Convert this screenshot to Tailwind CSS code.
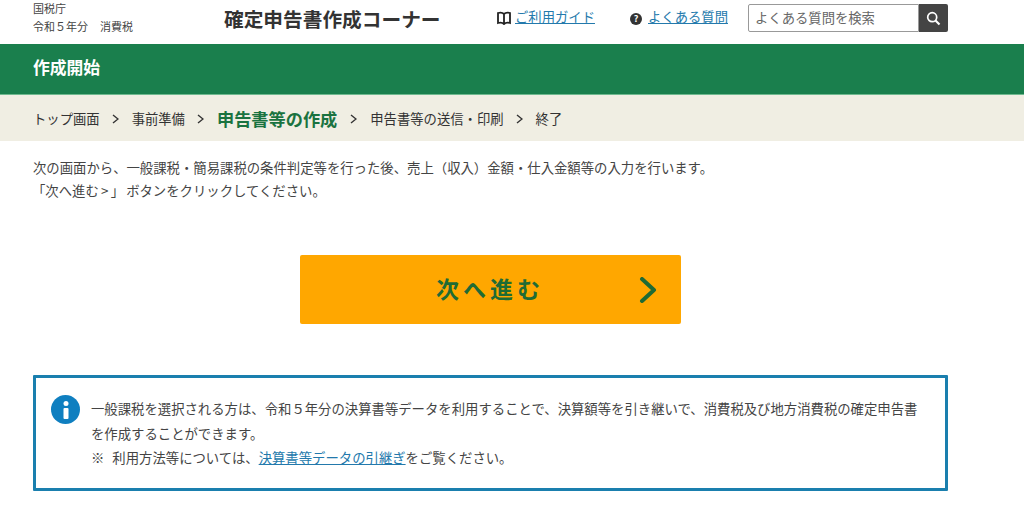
<!DOCTYPE html>
<html lang="ja">
<head>
<meta charset="utf-8">
<script src="https://cdn.jsdelivr.net/npm/@tailwindcss/browser@4"></script>
</head>
<body class="bg-white font-['Noto_Sans_CJK_JP','Noto_Sans',sans-serif] text-[#333] overflow-hidden">
<div class="h-[530px] w-[1024px] overflow-hidden">
  <header class="h-[44px] pl-[33px] pr-[76px] flex items-center">
    <div class="w-[191px] text-[11px] leading-[18px] text-[#444] mt-[-10px]">
      <div>国税庁</div>
      <div>令和５年分<span class="ml-[12px]">消費税</span></div>
    </div>
    <div class="w-[272px] text-[19.7px] font-bold text-[#333] leading-none mt-[-6px]">確定申告書作成コーナー</div>
    <div class="flex items-center gap-[3px] w-[134px] mt-[-10px]">
      <svg class="w-[16px] h-[14px] mt-[2px]" viewBox="0 0 16 14" fill="none" stroke="#222" stroke-width="1.8"><path d="M8 3C6.500 1.500 4 1.500 2 2V12C4 11.500 6.500 11.500 8 13C9.500 11.500 12 11.500 14 12V2C12 1.500 9.500 1.500 8 3ZM8 3V13"/></svg>
      <a class="text-[13.33px] leading-none text-[#2379ac] underline">ご利用ガイド</a>
    </div>
    <div class="flex items-center gap-[6px] w-[118px] mt-[-10px]">
      <span class="w-[12px] h-[12px] mt-[3px] rounded-full bg-[#333] text-white text-[9px] font-bold leading-[12px] text-center">?</span>
      <a class="text-[13.33px] leading-none text-[#2379ac] underline">よくある質問</a>
    </div>
    <div class="flex h-[28px] mt-[-8px]">
      <div class="w-[171px] border border-[#999] rounded-l-[2px] px-[6px] text-[13.33px] leading-[25px] text-[#666]">よくある質問を検索</div>
      <div class="w-[29px] bg-[#444] rounded-r-[2px] flex items-center justify-center">
        <svg class="w-[15px] h-[15px]" viewBox="0 0 15 15" fill="none" stroke="#fff" stroke-width="1.700"><circle cx="6.200" cy="6.200" r="4.500"/><path d="M9.500 9.500L13.500 13.500" stroke-width="2.200"/></svg>
      </div>
    </div>
  </header>
  <div class="h-[51px] bg-[#1a7f4d] border-b border-[#6fb98f] pl-[33px] flex items-center text-white font-bold text-[16.8px] leading-none pb-[3px]">作成開始</div>
  <nav class="h-[46px] bg-[#f0eee3] pl-[33px] flex items-center text-[13.33px] text-[#333] leading-none pt-[1px]">
    <span>トップ画面</span>
    <span class="w-[32px] flex justify-center"><svg class="w-[7px] h-[10px]" viewBox="0 0 7 10" fill="none" stroke="#333" stroke-width="1.400"><path d="M1 1L6 5L1 9"/></svg></span>
    <span>事前準備</span>
    <span class="w-[32px] flex justify-center"><svg class="w-[7px] h-[10px]" viewBox="0 0 7 10" fill="none" stroke="#333" stroke-width="1.400"><path d="M1 1L6 5L1 9"/></svg></span>
    <span class="text-[17.2px] font-bold text-[#1a7340]">申告書等の作成</span>
    <span class="w-[33px] flex justify-center"><svg class="w-[7px] h-[10px]" viewBox="0 0 7 10" fill="none" stroke="#333" stroke-width="1.400"><path d="M1 1L6 5L1 9"/></svg></span>
    <span>申告書等の送信・印刷</span>
    <span class="w-[32px] flex justify-center"><svg class="w-[7px] h-[10px]" viewBox="0 0 7 10" fill="none" stroke="#333" stroke-width="1.400"><path d="M1 1L6 5L1 9"/></svg></span>
    <span>終了</span>
  </nav>
  <main class="pl-[33px] pr-[76px]">
    <p class="pt-[15px] text-[13.36px] leading-[24px] text-[#444]">次の画面から、一般課税・簡易課税の条件判定等を行った後、売上（収入）金額・仕入金額等の入力を行います。<br><span class="ml-[-1px] relative top-[-1px]">「次へ進む<span class="inline-block w-[12px] text-center">&gt;</span><span class="mr-[2px]">」</span>ボタンをクリックしてください。</span></p>
    <div class="mt-[51px] flex justify-center">
      <a class="w-[381px] h-[69px] bg-[#ffa700] rounded-[2px] flex items-center justify-end pr-[24px] gap-[95px]">
        <span class="text-[23px] font-bold tracking-[4px] text-[#1f6b35] leading-none mt-[-3px]">次へ進む</span>
        <svg class="w-[18px] h-[26px]" viewBox="0 0 18 26" fill="none" stroke="#1f6b35" stroke-width="4" stroke-linecap="round" stroke-linejoin="round"><path d="M3 2L15 13L3 24"/></svg>
      </a>
    </div>
    <div class="mt-[51px] h-[116px] border-[3px] border-[#1a7fae] flex pl-[15px] pr-[26px] pt-[17px] rounded-[1px]">
      <span class="w-[29px] h-[29px] rounded-full bg-[#0f7fc0] shrink-0 mt-[0px] flex items-center justify-center">
        <svg class="w-[6px] h-[18px]" viewBox="0 0 6 18" fill="#fff"><circle cx="3" cy="2.500" r="2.500"/><rect x="0.500" y="7" width="5" height="11" rx="1"/></svg>
      </span>
      <p class="ml-[11px] text-[13.36px] leading-[24.5px] text-[#444] pt-[2px]">一般課税を選択される方は、令和５年分の決算書等データを利用することで、決算額等を引き継いで、消費税及び地方消費税の確定申告書を作成することができます。<br>※<span class="ml-[8px]">利用方法等については、</span><a class="text-[#2379ac] underline">決算書等データの引継ぎ</a>をご覧ください。</p>
    </div>
  </main>
</div>
</body>
</html>
